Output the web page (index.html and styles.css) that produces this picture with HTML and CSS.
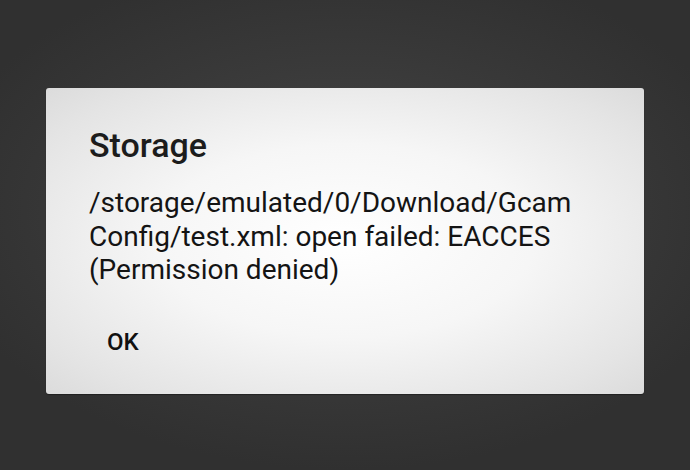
FILE: index.html
```html
<!DOCTYPE html>
<html>
<head>
<meta charset="utf-8">
<link rel="stylesheet" href="styles.css">
</head>
<body>
<div class="screen">
  <div class="dialog">
    <h1 class="title">Storage</h1>
    <p class="message">/storage/emulated/0/Download/Gcam Config/test.xml: open failed: EACCES (Permission denied)</p>
    <div class="actions">
      <button class="btn">OK</button>
    </div>
  </div>
</div>
</body>
</html>
```
FILE: styles.css
```css
html, body {
  margin: 0;
  padding: 0;
  width: 690px;
  height: 470px;
  overflow: hidden;
}
.screen {
  width: 690px;
  height: 470px;
  box-sizing: border-box;
  padding: 88px 0 0 46px;
  background: radial-gradient(ellipse 60% 55% at 50% 45%, #474747 0%, #3a3a3a 55%, #303030 100%);
  font-family: Roboto, "Noto Sans", sans-serif;
}
.dialog {
  width: 598px;
  height: 306px;
  box-sizing: border-box;
  padding: 37px 43px 0 43px;
  border-radius: 3px;
  background: radial-gradient(ellipse 70% 70% at 50% 50%, #ffffff 0%, #f6f6f6 45%, #e4e4e4 85%, #dcdcdc 100%);
  box-shadow: 0 1px 1px rgba(0,0,0,0.35);
  display: flex;
  flex-direction: column;
}
.title {
  margin: 0;
  font-size: 34px;
  line-height: 40px;
  font-weight: 500;
  color: #1c1c1c;
}
.message {
  margin: 21px 0 0 0;
  width: 510px;
  font-size: 28px;
  line-height: 33.5px;
  font-weight: 400;
  color: #141414;
}
.actions {
  margin-top: 41px;
  display: flex;
}
.btn {
  margin: 0 0 0 18px;
  padding: 0;
  border: 0;
  background: none;
  font-family: Roboto, "Noto Sans", sans-serif;
  font-size: 24px;
  line-height: 28px;
  font-weight: 500;
  color: #111;
}
```
